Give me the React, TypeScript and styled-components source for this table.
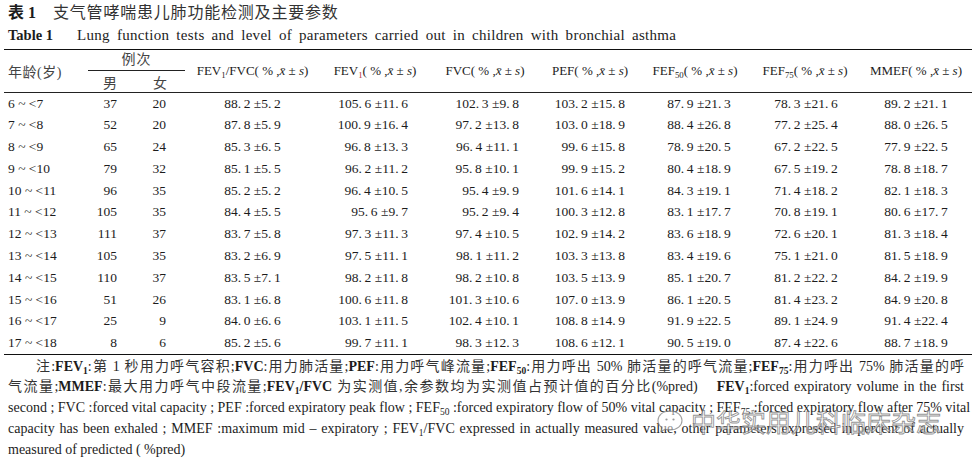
import React from "react";
import styled, { createGlobalStyle } from "styled-components";

const GlobalStyle = createGlobalStyle`
  html, body {
    margin: 0;
    padding: 0;
    background: #fff;
  }
  body {
    font-family: "Liberation Serif", "Noto Sans CJK SC", serif;
    color: #1c1c1c;
  }
`;

type Col = { w: number; align: "left" | "center" | "right"; pr?: number; pl?: number };

const cols: Col[] = [
  { w: 81, align: "left", pl: 4 },
  { w: 50, align: "right", pr: 18 },
  { w: 50, align: "right", pr: 19 },
  { w: 135, align: "center" },
  { w: 110, align: "right", pr: 22 },
  { w: 110, align: "right", pr: 21 },
  { w: 100, align: "right", pr: 15 },
  { w: 110, align: "center", pl: 8 },
  { w: 110, align: "center", pl: 2 },
  { w: 112, align: "center" },
];

const rows: string[][] = [
  ["6 ~ <7", "37", "20", "88.2 ±5.2", "105.6 ±11.6", "102.3 ±9.8", "103.2 ±15.8", "87.9 ±21.3", "78.3 ±21.6", "89.2 ±21.1"],
  ["7 ~ <8", "52", "20", "87.8 ±5.9", "100.9 ±16.4", "97.2 ±13.8", "103.0 ±18.9", "88.4 ±26.8", "77.2 ±25.4", "88.0 ±26.5"],
  ["8 ~ <9", "65", "24", "85.3 ±6.5", "96.8 ±13.3", "96.4 ±11.1", "99.6 ±15.8", "78.9 ±20.5", "67.2 ±22.5", "77.9 ±22.5"],
  ["9 ~ <10", "79", "32", "85.1 ±5.5", "96.2 ±11.2", "95.8 ±10.1", "99.9 ±15.2", "80.4 ±18.9", "67.5 ±19.2", "78.8 ±18.7"],
  ["10 ~ <11", "96", "35", "85.2 ±5.2", "96.4 ±10.5", "95.4 ±9.9", "101.6 ±14.1", "84.3 ±19.1", "71.4 ±18.2", "82.1 ±18.3"],
  ["11 ~ <12", "105", "35", "84.4 ±5.5", "95.6 ±9.7", "95.2 ±9.4", "100.3 ±12.8", "83.1 ±17.7", "70.8 ±19.1", "80.6 ±17.7"],
  ["12 ~ <13", "111", "37", "83.7 ±5.8", "97.3 ±11.3", "97.4 ±10.5", "102.9 ±14.2", "83.6 ±18.9", "72.6 ±20.1", "81.3 ±18.4"],
  ["13 ~ <14", "105", "35", "83.2 ±6.9", "97.5 ±11.1", "98.1 ±11.2", "103.3 ±13.8", "83.4 ±19.6", "75.1 ±21.0", "81.5 ±18.9"],
  ["14 ~ <15", "110", "37", "83.5 ±7.1", "98.2 ±11.8", "98.2 ±10.8", "103.5 ±13.9", "85.1 ±20.7", "81.2 ±22.2", "84.2 ±19.9"],
  ["15 ~ <16", "51", "26", "83.1 ±6.8", "100.6 ±11.8", "101.3 ±10.6", "107.0 ±13.9", "86.1 ±20.5", "81.4 ±23.2", "84.9 ±20.8"],
  ["16 ~ <17", "25", "9", "84.0 ±6.6", "103.1 ±11.5", "102.4 ±10.1", "108.8 ±14.9", "91.9 ±22.5", "89.1 ±24.9", "91.4 ±22.4"],
  ["17 ~ <18", "8", "6", "85.2 ±5.6", "99.7 ±11.1", "98.3 ±12.3", "108.6 ±12.1", "90.5 ±19.0", "87.4 ±22.6", "88.7 ±18.9"],
];

// the journal sets a small gap after each decimal point
const fmt = (s: string) => s.replace(/\./g, ".\u2009");

const Page = styled.div`
  position: relative;
  width: 974px;
  height: 464px;
  padding: 3px 2px 0 4px;
  box-sizing: border-box;
  overflow: hidden;
`;

const TitleCn = styled.div`
  height: 20px;
  line-height: 20px;
  padding-left: 4px;
  font-size: 16px;
  color: #333;
  display: flex;
  align-items: center;
`;

const TitleTag = styled.span`
  font-weight: 700;
  color: #1c1c1c;
  margin-right: 17px;
`;

const TitleText = styled.span`
  letter-spacing: 0.8px;
`;

const TitleEn = styled.div`
  margin-top: 1px;
  height: 22px;
  line-height: 22px;
  padding-left: 4px;
  font-size: 15px;
  display: flex;
  align-items: baseline;
`;

const TitleEnTag = styled.b`
  font-size: 14.5px;
  margin-right: 24px;
`;

const TitleEnText = styled.span`
  letter-spacing: 0.3px;
  word-spacing: 3px;
`;

const Table = styled.table`
  margin-top: 3px;
  width: 968px;
  border-collapse: collapse;
  table-layout: fixed;
  border-top: 1.5px solid #111;
  border-bottom: 1.5px solid #111;
  font-size: 13.5px;
  white-space: nowrap;
`;

const HeadRow = styled.tr<{ $h: number; $rule?: boolean }>`
  height: ${(p) => p.$h}px;
  border-bottom: ${(p) => (p.$rule ? "1px solid #222" : "none")};
`;

const Th = styled.th<{ $pl?: number }>`
  font-weight: 400;
  padding: 0 0 0 ${(p) => p.$pl ?? 0}px;
  text-align: center;
  vertical-align: middle;
  font-size: 13px;
`;

const ThCn = styled(Th)`
  color: #444;
  font-size: 14px;
  letter-spacing: 0.5px;
  text-align: left;
`;

const GroupHead = styled.div`
  margin-left: 3px;
  border-bottom: 1px solid #222;
  line-height: 20px;
  text-align: center;
  color: #444;
  font-size: 14px;
  letter-spacing: 1px;
`;

const SexHead = styled(Th)`
  color: #444;
  font-size: 14px;
`;

const Tr = styled.tr`
  height: 21.8px;
`;

const Td = styled.td<{ $align: string; $pr?: number; $pl?: number }>`
  padding: 0 ${(p) => p.$pr ?? 0}px 0 ${(p) => p.$pl ?? 0}px;
  text-align: ${(p) => p.$align};
  vertical-align: middle;
`;

const Sub = styled.sub<{ $red?: boolean }>`
  font-size: 0.68em;
  vertical-align: -0.3em;
  line-height: 0;
  color: ${(p) => (p.$red ? "#b0303e" : "inherit")};
`;

const Notes = styled.div`
  margin-top: 2px;
  padding: 0 4px 0 4px;
  font-size: 14px;
  line-height: 20.8px;
  width: 964px;
  box-sizing: border-box;
`;

const Line = styled.div<{ $indent?: boolean; $last?: boolean }>`
  text-align: justify;
  text-align-last: ${(p) => (p.$last ? "left" : "justify")};
  text-indent: ${(p) => (p.$indent ? "28px" : "0")};
  white-space: nowrap;
`;

const Cn = styled.span`
  color: #333;
`;

const Watermark = styled.div`
  position: absolute;
  left: 655px;
  top: 403px;
  display: flex;
  align-items: center;
  gap: 6px;
  pointer-events: none;
`;

const WatermarkText = styled.span`
  font-family: "Noto Sans CJK SC", sans-serif;
  font-size: 25px;
  color: rgba(255, 255, 255, 0.55);
  -webkit-text-stroke: 0.9px rgba(110, 110, 110, 0.75);
`;

const Head = ({ children }: { children: React.ReactNode }) => (
  <Th rowSpan={2}>{children}</Th>
);

const Stat = () => (
  <>
    (&nbsp;% ,<i>x&#772;</i> ± <i>s</i>)
  </>
);

function WeChatMark() {
  return (
    <svg width="30" height="26" viewBox="0 0 30 26">
      <path
        d="M15 3 C7.5 3 3 7.6 3 12.6 C3 15.6 4.6 18 7 19.6 L6 23.4 L10.4 21.2 C11.9 21.7 13.4 22 15 22 C22.3 22 27 17.6 27 12.6 C27 7.6 22.3 3 15 3 Z"
        fill="rgba(255,255,255,0.5)"
        stroke="rgba(120,120,120,0.7)"
        strokeWidth="1.1"
      />
      <circle cx="11.5" cy="11.5" r="1.1" fill="rgba(120,120,120,0.75)" />
      <circle cx="18.5" cy="11.5" r="1.1" fill="rgba(120,120,120,0.75)" />
    </svg>
  );
}

export default function App() {
  return (
    <Page>
      <GlobalStyle />
      <TitleCn>
        <TitleTag>表 1</TitleTag>
        <TitleText>支气管哮喘患儿肺功能检测及主要参数</TitleText>
      </TitleCn>
      <TitleEn>
        <TitleEnTag>Table 1</TitleEnTag>
        <TitleEnText>
          Lung function tests and level of parameters carried out in children with bronchial asthma
        </TitleEnText>
      </TitleEn>

      <Table>
        <colgroup>
          {cols.map((c, i) => (
            <col key={i} style={{ width: c.w }} />
          ))}
        </colgroup>
        <thead>
          <HeadRow $h={22}>
            <ThCn rowSpan={2} $pl={4}>
              年龄(岁)
            </ThCn>
            <Th colSpan={2}>
              <GroupHead>例次</GroupHead>
            </Th>
            <Head>
              FEV<Sub>1</Sub>/FVC<Stat />
            </Head>
            <Head>
              FEV<Sub $red>1</Sub>
              <Stat />
            </Head>
            <Head>
              FVC<Stat />
            </Head>
            <Head>
              PEF<Stat />
            </Head>
            <Head>
              FEF<Sub>50</Sub>
              <Stat />
            </Head>
            <Head>
              FEF<Sub>75</Sub>
              <Stat />
            </Head>
            <Head>
              MMEF<Stat />
            </Head>
          </HeadRow>
          <HeadRow $h={21} $rule>
            <SexHead>男</SexHead>
            <SexHead>女</SexHead>
          </HeadRow>
        </thead>
        <tbody>
          {rows.map((r, i) => (
            <Tr key={i}>
              {r.map((v, j) => (
                <Td key={j} $align={cols[j].align} $pr={cols[j].pr} $pl={cols[j].pl}>
                  {j > 2 ? fmt(v) : v}
                </Td>
              ))}
            </Tr>
          ))}
        </tbody>
      </Table>

      <Notes>
        <Line $indent>
          <Cn>注</Cn>:<b>FEV<Sub>1</Sub></b>:<Cn>第</Cn> 1 <Cn>秒用力呼气容积</Cn>;<b>FVC</b>:
          <Cn>用力肺活量</Cn>;<b>PEF</b>:<Cn>用力呼气峰流量</Cn>;<b>FEF<Sub>50</Sub></b>:
          <Cn>用力呼出</Cn> 50% <Cn>肺活量的呼气流量</Cn>;<b>FEF<Sub>75</Sub></b>:<Cn>用力呼出</Cn> 75%{" "}
          <Cn>肺活量的呼</Cn>
        </Line>
        <Line>
          <Cn>气流量</Cn>;<b>MMEF</b>:<Cn>最大用力呼气中段流量</Cn>;<b>FEV<Sub>1</Sub>/FVC</b>{" "}
          <Cn>为实测值,余参数均为实测值占预计值的百分比</Cn>(%pred)&emsp; <b>FEV<Sub>1</Sub></b>
          :forced expiratory volume in the first
        </Line>
        <Line>
          second ; FVC :forced vital capacity ; PEF :forced expiratory peak flow ; FEF<Sub>50</Sub> :forced
          expiratory flow of 50% vital capacity ; FEF<Sub>75</Sub> :forced expiratory flow after 75% vital
        </Line>
        <Line>
          capacity has been exhaled ; MMEF :maximum mid – expiratory ; FEV<Sub>1</Sub>/FVC expressed in
          actually measured value, other parameters expressed in percent of actually
        </Line>
        <Line $last>measured of predicted ( %pred)</Line>
      </Notes>

      <Watermark>
        <WeChatMark />
        <WatermarkText>中华实用儿科临床杂志</WatermarkText>
      </Watermark>
    </Page>
  );
}
